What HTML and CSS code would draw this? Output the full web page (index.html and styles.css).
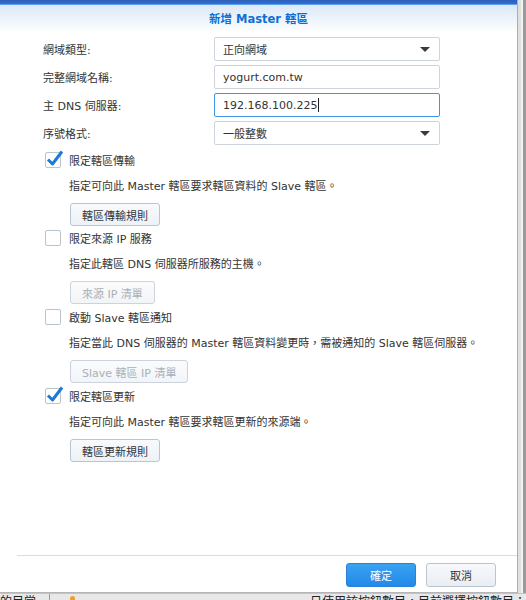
FILE: index.html
```html
<html lang="zh-Hant">

<head>
  <meta charset="utf-8" />
  <title>新增 Master 轄區</title>
  <meta name="viewport" content="width=device-width, initial-scale=1" />
  <link rel="stylesheet" href="styles.css">
</head>

<body>
  <div class="desk">
    <div class="dialog">
      <div class="topbar"></div>
      <div class="header">新增 Master 轄區</div>

      <div class="fields">
        <label class="field-label">網域類型:</label>
        <div class="select">
          <span>正向網域</span>
          <span class="arrow"></span>
        </div>

        <label class="field-label">完整網域名稱:</label>
        <div class="input">yogurt.com.tw</div>

        <label class="field-label">主 DNS 伺服器:</label>
        <div class="input focused">192.168.100.225<span class="caret"></span></div>

        <label class="field-label">序號格式:</label>
        <div class="select">
          <span>一般整數</span>
          <span class="arrow"></span>
        </div>
      </div>

      <div class="sections">
        <div class="section">
          <div class="check-row">
            <span class="checkbox checked">
              <svg width="20" height="20" viewBox="0 0 20 20"><path d="M3 10.5 L7.5 15 L17 2.5" fill="none" stroke="#1b7ad9" stroke-width="3" stroke-linejoin="round" /></svg>
            </span>
            <span>限定轄區傳輸</span>
          </div>
          <div class="desc">指定可向此 Master 轄區要求轄區資料的 Slave 轄區。</div>
          <button class="btn">轄區傳輸規則</button>
        </div>

        <div class="section">
          <div class="check-row">
            <span class="checkbox"></span>
            <span>限定來源 IP 服務</span>
          </div>
          <div class="desc">指定此轄區 DNS 伺服器所服務的主機。</div>
          <button class="btn" disabled>來源 IP 清單</button>
        </div>

        <div class="section">
          <div class="check-row">
            <span class="checkbox"></span>
            <span>啟動 Slave 轄區通知</span>
          </div>
          <div class="desc">指定當此 DNS 伺服器的 Master 轄區資料變更時，需被通知的 Slave 轄區伺服器。</div>
          <button class="btn" disabled>Slave 轄區 IP 清單</button>
        </div>

        <div class="section">
          <div class="check-row">
            <span class="checkbox checked">
              <svg width="20" height="20" viewBox="0 0 20 20"><path d="M3 10.5 L7.5 15 L17 2.5" fill="none" stroke="#1b7ad9" stroke-width="3" stroke-linejoin="round" /></svg>
            </span>
            <span>限定轄區更新</span>
          </div>
          <div class="desc">指定可向此 Master 轄區要求轄區更新的來源端。</div>
          <button class="btn">轄區更新規則</button>
        </div>
      </div>

      <div class="footer">
        <button class="btn primary">確定</button>
        <button class="btn plain">取消</button>
      </div>
    </div>
    <div class="side"></div>
  </div>

  <div class="behind">
    <span class="behind-left">的目常</span>
    <span class="behind-sep"></span>
    <span class="behind-icon"></span>
    <span class="behind-text">日使用該按鈕數目，目前選擇按鈕數目：</span>
  </div>
</body>

</html>
```

FILE: styles.css
```css
body {
  margin: 0;
  width: 526px;
  height: 600px;
  overflow: hidden;
  background: #e4e6e8;
  font-family: 'DejaVu Sans', 'Noto Sans CJK TC', sans-serif;
  font-size: 11px;
  color: #333;
}

* {
  box-sizing: border-box;
}

.desk {
  display: flex;
  height: 593px;
}

.dialog {
  width: 518px;
  height: 593px;
  display: flex;
  flex-direction: column;
  background: #fff;
  border-right: 1px solid #a7aeb5;
  border-bottom: 1px solid #b5b5b5;
}

.topbar {
  height: 5px;
  background: linear-gradient(#2f5fb8, #2e6fd6);
  border-bottom: 1px solid #5aa0ee;
}

.header {
  height: 28px;
  line-height: 28px;
  text-align: center;
  font-size: 11.5px;
  font-weight: bold;
  color: #0d6fd6;
  background: linear-gradient(#dbe9f7, #ffffff);
}

.fields {
  display: grid;
  grid-template-columns: 171px 226px;
  grid-auto-rows: 24px;
  row-gap: 4px;
  padding: 4px 0 0 43px;
}

.field-label {
  display: flex;
  align-items: center;
}

.select,
.input {
  display: flex;
  align-items: center;
  justify-content: space-between;
  padding: 0 8px;
  border: 1px solid #cdd4dc;
  border-radius: 2px;
  background: #fff;
}

.input {
  justify-content: flex-start;
}

.input.focused {
  border-color: #3d97e6;
}

.caret {
  display: inline-block;
  width: 1px;
  height: 14px;
  margin-left: 1px;
  background: #222;
}

.arrow {
  width: 0;
  height: 0;
  margin-right: 1px;
  border-left: 5px solid transparent;
  border-right: 5px solid transparent;
  border-top: 5px solid #3c3c3c;
}

.sections {
  padding: 3px 0 0 45px;
}

.section {
  display: flex;
  flex-direction: column;
  align-items: flex-start;
  height: 78px;
}

.section:nth-child(n+3) {
  margin-top: 1px;
}

.check-row {
  display: flex;
  align-items: center;
  gap: 8px;
  height: 24px;
}

.checkbox {
  position: relative;
  width: 16px;
  height: 16px;
  border: 1px solid #bac4ce;
  border-radius: 2px;
  background: #fff;
}

.checkbox svg {
  position: absolute;
  left: -1px;
  top: -4px;
}

.desc {
  margin: 5px 0 0 24px;
  height: 20px;
  line-height: 20px;
}

.btn {
  height: 23px;
  padding: 0 11px;
  margin: 6px 0 0 25px;
  font: inherit;
  color: #333;
  border: 1px solid #b9c5d1;
  border-radius: 3px;
  background: linear-gradient(#f8fafc, #edf2f7);
}

.btn:disabled {
  color: #a9b0b8;
  border-color: #cbd4dc;
  background: linear-gradient(#fafbfc, #f2f5f8);
}

.footer {
  margin: auto 0 0 17px;
  display: flex;
  justify-content: flex-end;
  gap: 10px;
  padding: 7px 21px 0 0;
  height: 37px;
  border-top: 1px solid #dcdcdc;
}

.footer .btn {
  width: 70px;
  height: 24px;
  margin: 0;
  padding: 0;
}

.btn.primary {
  color: #fff;
  border-color: #2a82d8;
  background: linear-gradient(#3ca2f2, #2189e8);
}

.btn.plain {
  background: linear-gradient(#f7f9fb, #e9eef3);
}

.side {
  width: 8px;
  background: #f2f2f2;
  border-left: 3px solid #e0e0e0;
  border-right: 3px solid #9a9a9a;
}

.behind {
  display: flex;
  align-items: flex-start;
  height: 7px;
  overflow: hidden;
  background: #e8e8e8;
  border-top: 1px solid #c4c4c4;
  font-size: 12px;
  color: #222;
  line-height: 14px;
}

.behind-left {
  width: 108px;
  margin-top: 1px;
}

.behind-sep {
  width: 1px;
  height: 7px;
  background: #999;
}

.behind-icon {
  width: 12px;
  height: 8px;
  margin: 2px 0 0 20px;
  background: #f0a020;
  border-radius: 4px 4px 0 0;
}

.behind-text {
  margin: 1px 0 0 235px;
  white-space: nowrap;
}
```
